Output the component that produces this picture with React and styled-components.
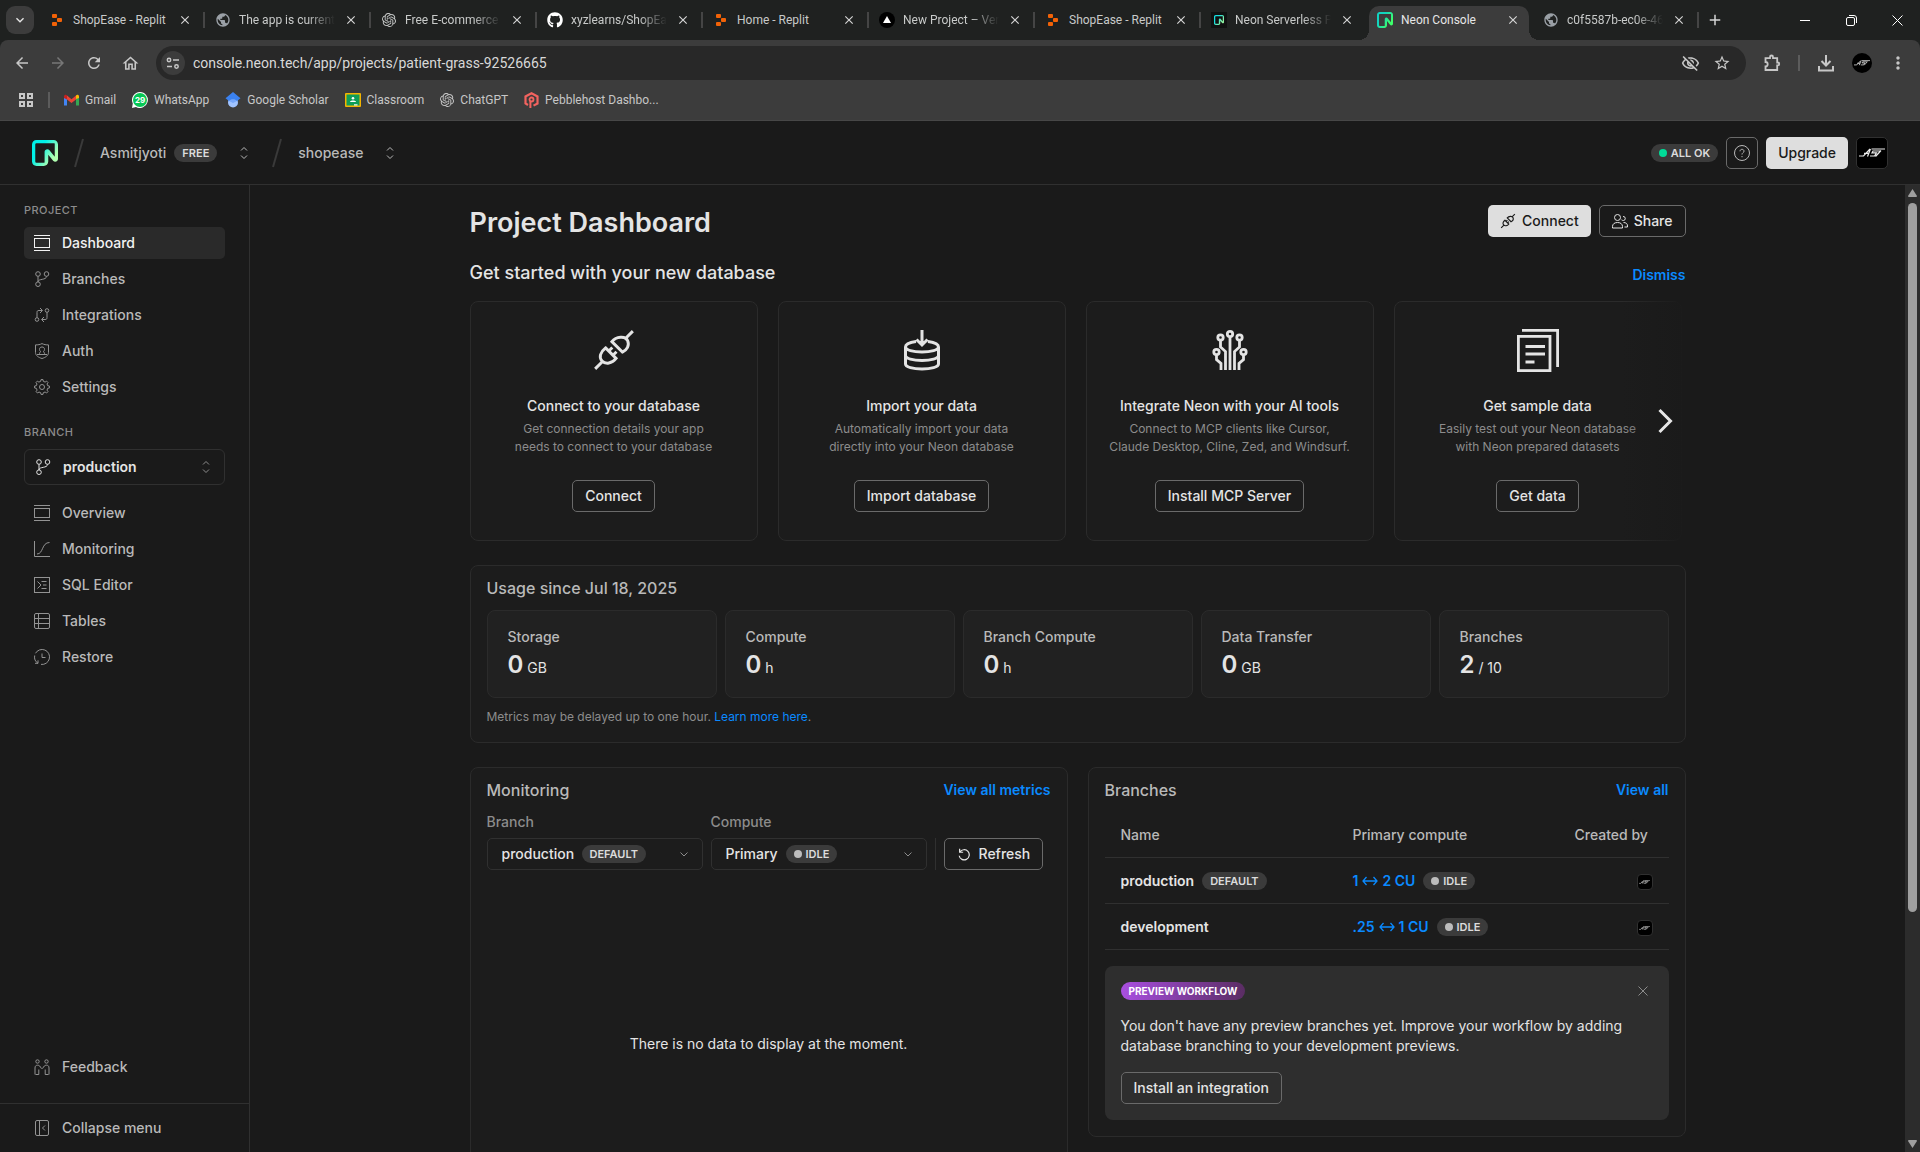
import React from "react";
import styled, { createGlobalStyle, css } from "styled-components";
import {
  MdPublic, MdArrowBack, MdArrowForward, MdRefresh, MdOutlineHome,
  MdStarBorder, MdOutlineVisibilityOff, MdMoreVert, MdClose, MdAdd, MdKeyboardArrowDown,
} from "react-icons/md";
import { FaGithub } from "react-icons/fa";
import { SiOpenai } from "react-icons/si";

const c = {
  bg: "#1a1a1a", panel: "#1c1c1c", card: "#212121", raised: "#2e2e2e", line: "#303030",
  badge: "#3b3b3b", outline: "#6a6a6a", text: "#e4e4e4", mid: "#b9b9b9", soft: "#8c8c8c",
  link: "#0a8aff", solid: "#dedede", strip: "#1f2120", chrome: "#3c3c3c", field: "#282828",
};
const ui = `Inter, "Liberation Sans", sans-serif`;
const browserFont = `Roboto, "Noto Sans", sans-serif`;

const Global = createGlobalStyle`
  *, *::before, *::after { box-sizing: border-box; }
  html, body, #root { height: 100%; }
  body { margin: 0; background: ${c.bg}; color: ${c.text}; font: 400 14px/20px ${ui}; }
  button, input, select { font: inherit; color: inherit; margin: 0; }
  button { cursor: pointer; padding: 0; border: 0; background: none; }
  a { text-decoration: none; color: inherit; }
  h1, h2, h3, p, ul { margin: 0; padding: 0; }
  ul { list-style: none; }
  svg { display: block; flex: none; }
`;

const Page = styled.div`
  display: flex;
  flex-direction: column;
  height: 100vh;
  overflow: hidden;
`;

/* ---------- browser chrome ---------- */

const Browser = styled.header`
  flex: none;
  background: ${c.strip};
  font-family: ${browserFont};
  font-size: 12px;
  line-height: 16px;
`;
const TabStrip = styled.div`
  display: flex;
  align-items: flex-end;
  height: 40px;
  padding-left: 6px;
  color: #c8cac9;
`;
const TabSearch = styled.button`
  display: grid;
  place-items: center;
  width: 28px;
  height: 28px;
  margin: 0 4px 6px 0;
  border-radius: 9px;
  background: ${c.chrome};
  color: #e6e6e6;
`;
const Tabs = styled.ul`
  display: flex;
  flex: 0 1 1660px;
  min-width: 0;
`;
const flare = css`
  content: "";
  position: absolute;
  bottom: 0;
  width: 10px;
  height: 10px;
`;
const Tab = styled.li`
  position: relative;
  display: flex;
  flex: 1 1 0;
  align-items: center;
  gap: 8px;
  min-width: 0;
  height: 34px;
  padding: 0 8px 6px 8px;
  margin: 0 3px;
  ${(p) => p.$active && css`
    border-radius: 10px 10px 0 0;
    background: ${c.chrome};
    color: #e6e6e6;
    &::before { ${flare} left: -10px; background: radial-gradient(circle at 0 0, transparent 10px, ${c.chrome} 10px); }
    &::after { ${flare} right: -10px; background: radial-gradient(circle at 100% 0, transparent 10px, ${c.chrome} 10px); }
  `}
  ${(p) => p.$divided && css`
    &::after { content: ""; position: absolute; right: -4px; top: 6px; width: 2px; height: 16px; background: #454545; }
  `}
`;
const Favicon = styled.span`
  display: grid;
  place-items: center;
  flex: none;
  width: 16px;
  height: 16px;
`;
const TabTitle = styled.button`
  flex: 1;
  min-width: 0;
  overflow: hidden;
  text-align: left;
  white-space: nowrap;
  ${(p) => p.$fade && css`mask-image: linear-gradient(90deg, #000 calc(100% - 28px), transparent);`}
`;
const TabClose = styled.button`
  display: grid;
  place-items: center;
  flex: none;
  width: 16px;
  height: 16px;
  color: #d5d5d5;
`;
const NewTab = styled(TabClose)`
  width: 20px;
  height: 20px;
  margin: 0 0 10px 7px;
`;
const WindowButtons = styled.div`
  display: flex;
  margin-left: auto;
  height: 40px;
  color: #fff;
`;
const WindowButton = styled.button`
  display: grid;
  place-items: center;
  width: 46px;
`;
const Chrome = styled.div`
  border-bottom: 1px solid #474747;
  border-radius: 8px 8px 0 0;
  background: ${c.chrome};
  color: #c7c7c7;
`;
const AddressRow = styled.div`
  display: flex;
  align-items: center;
  height: 46px;
  padding: 0 8px;
`;
const ToolButton = styled.button`
  display: grid;
  place-items: center;
  flex: none;
  width: ${(p) => p.$w || 28}px;
  height: 28px;
  margin-right: ${(p) => (p.$last ? 0 : 8)}px;
  color: ${(p) => (p.$dim ? "#777" : "#c7c7c7")};
`;
const Omnibox = styled.label`
  display: flex;
  flex: 1;
  align-items: center;
  gap: 8px;
  height: 34px;
  margin: 0 12px 0 4px;
  padding: 0 12px 0 5px;
  border-radius: 17px;
  background: ${c.field};
`;
const SiteInfo = styled.span`
  display: grid;
  place-items: center;
  width: 24px;
  height: 24px;
  border-radius: 50%;
  background: ${c.chrome};
`;
const Address = styled.input`
  flex: 1;
  min-width: 0;
  height: 24px;
  padding: 0;
  border: 0;
  outline: 0;
  background: none;
  color: #d8d8d8;
  font-size: 14px;
`;
const Rule = styled.span`
  flex: none;
  width: 2px;
  height: 16px;
  background: #5c5c5c;
`;
const ToolEnd = styled.div`
  display: flex;
  align-items: center;
  gap: 12px;
`;
const RoundAvatar = styled.span`
  display: grid;
  place-items: center;
  width: 20px;
  height: 20px;
  border-radius: 50%;
  background: #000;
`;
const BookmarkRow = styled.nav`
  display: flex;
  align-items: center;
  gap: 14px;
  height: 34px;
  padding: 0 18px 6px;
`;
const Bookmarks = styled.ul`
  display: flex;
  gap: 16px;
`;
const Bookmark = styled.a`
  display: flex;
  align-items: center;
  gap: 6px;
  white-space: nowrap;
`;

/* ---------- app shell ---------- */

const AppBar = styled.header`
  display: flex;
  flex: none;
  align-items: center;
  height: 64px;
  padding: 0 32px;
  border-bottom: 1px solid ${c.line};
`;
const Crumb = styled.button`
  display: flex;
  align-items: center;
  gap: 8px;
  margin-left: 16px;
  color: ${c.mid};
  font-weight: 500;
`;
const CrumbArrow = styled.span`
  display: grid;
  place-items: center;
  width: 16px;
  margin-left: 11px;
`;
const Slash = styled.span`
  margin-left: ${(p) => (p.$wide ? 20 : 16)}px;
`;
const AppBarEnd = styled.div`
  display: flex;
  align-items: center;
  gap: 8px;
  margin-left: auto;
`;
const Badge = styled.span`
  display: inline-flex;
  align-items: center;
  gap: 4px;
  height: 18px;
  padding: 0 8px;
  border-radius: 9px;
  background: ${(p) => (p.$accent ? "linear-gradient(90deg, #a94fe0, #5a2d63)" : c.badge)};
  color: ${(p) => (p.$accent ? "#fff" : "#dcdcdc")};
  font-size: ${(p) => (p.$accent ? 10 : 11)}px;
  font-weight: ${(p) => (p.$accent ? 700 : 600)};
  line-height: 18px;
  white-space: nowrap;
`;
const Dot = styled.span`
  width: 8px;
  height: 8px;
  border-radius: 50%;
  background: ${(p) => p.$color || "#bdbdbd"};
`;
const Button = styled.button`
  display: inline-flex;
  align-items: center;
  justify-content: center;
  gap: ${(p) => (p.$roomy ? 8 : 6)}px;
  height: 32px;
  padding: 0 12px;
  border: ${(p) => (p.$solid ? "0" : `1px solid ${c.outline}`)};
  border-radius: 5px;
  background: ${(p) => (p.$solid ? c.solid : "transparent")};
  color: ${(p) => (p.$solid ? "#1a1a1a" : c.text)};
  font-weight: 500;
  white-space: nowrap;
`;
const IconButton = styled(Button)`
  width: 32px;
  padding: 0;
  color: ${c.mid};
`;
const SquareAvatar = styled.span`
  display: inline-grid;
  place-items: center;
  width: ${(p) => p.$size}px;
  height: ${(p) => p.$size}px;
  border: 1px solid ${c.line};
  border-radius: ${(p) => (p.$size > 20 ? 5 : 4)}px;
  background: #000;
  vertical-align: middle;
`;
const Body = styled.div`
  display: flex;
  flex: 1;
  min-height: 0;
`;
const Sidebar = styled.aside`
  display: flex;
  flex: 0 0 250px;
  flex-direction: column;
  border-right: 1px solid ${c.line};
`;
const NavArea = styled.nav`
  flex: 1;
  padding: 16px 24px 0;
`;
const NavHeading = styled.h2`
  margin: ${(p) => (p.$later ? 20 : 0)}px 0 8px;
  color: ${c.soft};
  font-size: 11px;
  font-weight: 500;
  line-height: 18px;
  letter-spacing: 0.04em;
`;
const NavList = styled.ul`
  display: grid;
  gap: 4px;
`;
const navItem = css`
  display: flex;
  align-items: center;
  gap: 12px;
  width: 100%;
  height: 32px;
  padding: 0 10px;
  border-radius: 5px;
  font-weight: 500;
`;
const NavLink = styled.a`
  ${navItem}
  background: ${(p) => (p.$active ? "#2a2a2a" : "transparent")};
  color: ${(p) => (p.$active ? "#f2f2f2" : c.mid)};
  svg { color: ${(p) => (p.$active ? "#f2f2f2" : "#939393")}; }
`;
const NavButton = styled.button`
  ${navItem}
  color: ${c.mid};
  svg { color: #939393; }
`;
const BranchPicker = styled.label`
  display: flex;
  align-items: center;
  gap: 12px;
  height: 36px;
  margin-bottom: 12px;
  padding: 0 10px;
  border: 1px solid ${c.line};
  border-radius: 6px;
  svg:last-child { color: ${c.soft}; }
`;
const PlainSelect = styled.select`
  flex: 1;
  min-width: 0;
  height: 24px;
  padding: 0;
  border: 0;
  outline: 0;
  appearance: none;
  background: transparent;
  color: ${c.text};
  font-weight: ${(p) => p.$weight || 500};
`;
const NavExtra = styled.div`
  padding: 0 24px 20px;
`;
const NavFoot = styled.div`
  padding: 8px 24px;
  border-top: 1px solid ${c.line};
`;

/* ---------- dashboard ---------- */

const Main = styled.main`
  flex: 1;
  min-width: 0;
  overflow-y: auto;
  scrollbar-width: none;
`;
const Column = styled.div`
  max-width: 1216px;
  margin: 0 auto;
  padding: 20px 0 24px;
`;
const TitleRow = styled.div`
  display: flex;
  align-items: flex-start;
  justify-content: space-between;
  margin-bottom: 20px;
`;
const Title = styled.h1`
  font-size: 27px;
  font-weight: 600;
  line-height: 36px;
`;
const Actions = styled.div`
  display: flex;
  gap: 8px;
`;
const SubRow = styled.div`
  display: flex;
  align-items: flex-end;
  justify-content: space-between;
  margin-bottom: 16px;
`;
const Subtitle = styled.h2`
  font-size: 18px;
  font-weight: 500;
  line-height: 24px;
`;
const TextLink = styled.a`
  color: ${c.link};
  font-weight: ${(p) => p.$weight || 600};
`;
const TextButton = styled.button`
  color: ${c.link};
  font-weight: 600;
`;
const Carousel = styled.div`
  position: relative;
  margin-bottom: 24px;
`;
const Cards = styled.div`
  display: flex;
  gap: 20px;
  overflow: hidden;
`;
const Card = styled.article`
  display: flex;
  flex: 0 0 288px;
  flex-direction: column;
  align-items: center;
  padding: 26px 12px 28px;
  border: 1px solid #2b2b2b;
  border-radius: 8px;
  background: ${c.panel};
  text-align: center;
`;
const CardTitle = styled.h3`
  margin: 24px 0 4px;
  font-size: 14px;
  font-weight: 500;
  line-height: 20px;
`;
const CardText = styled.p`
  margin-bottom: 24px;
  color: ${c.soft};
  font-size: 12px;
  line-height: 18px;
  white-space: pre-line;
`;
const NextCards = styled.button`
  position: absolute;
  top: 0;
  right: 0;
  bottom: 0;
  width: 64px;
  display: flex;
  align-items: center;
  justify-content: flex-end;
  padding-right: 8px;
  background: linear-gradient(90deg, transparent, ${c.bg});
  color: #e6e6e6;
`;
const Panel = styled.section`
  padding: 10px 16px 16px;
  border: 1px solid #2b2b2b;
  border-radius: 8px;
  background: ${c.panel};
`;
const PanelHead = styled.div`
  display: flex;
  align-items: center;
  justify-content: space-between;
  margin-bottom: 10px;
`;
const PanelTitle = styled.h2`
  color: ${c.mid};
  font-size: 16px;
  font-weight: 500;
  line-height: 24px;
`;
const Stats = styled.div`
  display: grid;
  grid-template-columns: repeat(5, 1fr);
  gap: 8px;
  margin-bottom: 10px;
`;
const Stat = styled.div`
  height: 88px;
  padding: 16px 20px;
  border: 1px solid #2b2b2b;
  border-radius: 8px;
  background: ${c.card};
`;
const StatLabel = styled.div`
  color: ${c.mid};
  font-weight: 500;
`;
const StatValue = styled.div`
  line-height: 36px;
  b { font-size: 24px; font-weight: 600; }
`;
const Note = styled.p`
  color: ${c.soft};
  font-size: 12px;
  line-height: 18px;
`;
const Pair = styled.div`
  display: grid;
  grid-template-columns: 1fr 1fr;
  gap: 20px;
  align-items: start;
  margin-top: 24px;
`;
const Filters = styled.div`
  display: flex;
  align-items: flex-end;
  gap: 8px;
`;
const Field = styled.div`
  flex: 0 1 216px;
  min-width: 0;
`;
const FieldLabel = styled.label`
  display: block;
  margin-bottom: 6px;
  color: ${c.soft};
  font-weight: 500;
`;
const SelectBox = styled.div`
  display: grid;
  grid-template-columns: auto 1fr auto;
  align-items: center;
  height: 32px;
  padding: 0 12px 0 14px;
  border: 1px solid ${c.line};
  border-radius: 5px;
  color: ${c.soft};
  select { grid-area: 1 / 1 / 2 / 4; width: 100%; }
  ${Badge} { grid-area: 1 / 1; margin-left: ${(p) => p.$offset}px; pointer-events: none; }
  svg { grid-area: 1 / 3; pointer-events: none; }
`;
const FilterRule = styled.span`
  width: 1px;
  height: 32px;
  background: ${c.line};
`;
const Empty = styled.p`
  display: grid;
  place-items: center;
  height: 348px;
`;
const Table = styled.table`
  width: 100%;
  margin-bottom: 16px;
  table-layout: fixed;
  border-collapse: separate;
  border-spacing: 0;
`;
const Th = styled.th`
  width: ${(p) => p.$w};
  height: 46px;
  padding: 0 16px;
  border-bottom: 1px solid ${c.line};
  color: ${c.mid};
  font-weight: 500;
  text-align: left;
`;
const Td = styled.td`
  height: 46px;
  padding: 0 16px;
  border-bottom: 1px solid ${c.line};
  font-weight: 600;
  text-align: ${(p) => (p.$end ? "right" : "left")};
`;
const Inline = styled.span`
  display: inline-flex;
  align-items: center;
  gap: 8px;
`;
const Size = styled(TextLink)`
  display: inline-flex;
  align-items: center;
  gap: 4px;
`;
const Notice = styled.aside`
  display: grid;
  grid-template-columns: 1fr auto;
  gap: 16px;
  justify-items: start;
  padding: 16px;
  border-radius: 8px;
  background: ${c.raised};
`;
const NoticeText = styled.p`
  grid-column: 1 / -1;
  max-width: 520px;
`;
const CloseButton = styled.button`
  display: grid;
  place-items: center;
  width: 20px;
  height: 18px;
  color: #8c8c8c;
`;

const Scrollbar = styled.div`
  display: flex;
  flex: 0 0 15px;
  flex-direction: column;
  align-items: center;
  background: #2c2c2c;
  color: #9f9f9f;
`;
const Track = styled.div`
  flex: 1;
  padding-top: 2px;
`;
const Thumb = styled.div`
  width: 9px;
  height: 76%;
  border-radius: 5px;
  background: currentColor;
`;
const ScrollArrow = styled.span`
  display: grid;
  place-items: center;
  height: 16px;
`;

/* ---------- drawings ---------- */

const Svg = ({ size = 16, box = 16, w = 1, children }) => (
  <svg width={size} height={size} viewBox={`0 0 ${box} ${box}`} fill="none" stroke="currentColor" strokeWidth={w} aria-hidden="true">{children}</svg>
);

const NeonMark = ({ size, from, to, id }) => (
  <svg width={size} height={size} viewBox="0 0 64 64" aria-hidden="true">
    <defs>
      <linearGradient id={id} x1="0" y1="10" x2="64" y2="54" gradientUnits="userSpaceOnUse">
        <stop stopColor={from} /><stop offset="0.3" stopColor={from} /><stop offset="0.8" stopColor={to} /><stop offset="1" stopColor={to} />
      </linearGradient>
    </defs>
    <path fill={`url(#${id})`} d="M0 11C0 5 5 0 11 0h42c6 0 11 5 11 11v36c0 6-8 9-12 4L40 36v17c0 6-5 11-11 11H11C5 64 0 59 0 53V11Zm11-3a3 3 0 0 0-3 3v42a3 3 0 0 0 3 3h19c1 0 1-1 1-2V29c0-6 8-9 12-4l13 16V11c0-2 0-3-2-3H11Z" />
  </svg>
);
const ReplitMark = () => (
  <svg width="12" height="14" viewBox="0 0 12 14" fill="#f26207" aria-hidden="true">
    <rect x="1" y="1" width="5" height="4" rx="1" /><rect x="6" y="5" width="5" height="4" rx="1" /><rect x="1" y="9" width="5" height="4" rx="1" />
  </svg>
);
const VercelMark = () => (
  <svg width="16" height="16" viewBox="0 0 16 16" aria-hidden="true"><circle cx="8" cy="8" r="8" fill="#000" /><path d="M8 4l4 7H4z" fill="#fff" /></svg>
);
const NeonTile = () => (
  <svg width="16" height="16" viewBox="0 0 16 16" aria-hidden="true"><rect width="16" height="16" fill="#111" /><g transform="translate(3 3)"><NeonMark size={10} from="#16e0e0" to="#8ff0a0" id="nt" /></g></svg>
);
const Monogram = ({ width }) => (
  <svg width={width} height={(width * 9) / 26} viewBox="0 0 26 9" fill="none" stroke="#ececec" strokeWidth="1.2" aria-hidden="true">
    <path d="M0 8h4.500L11 1M5 5.300h5M8.500 8.500l3-7.500M12.500 1h13.500M11 8h4.500l2-3.200h-4.500l1-1.800h7M16.500 8.500L22 2.500" />
  </svg>
);
const GmailMark = () => (
  <svg width="15" height="12" viewBox="0 0 15 12" aria-hidden="true">
    <path d="M0 2v9.500h3V5z" fill="#4285f4" /><path d="M15 2v9.500h-3V5z" fill="#34a853" />
    <path d="M12 5V1.500C13 .3 15 .8 15 2.400V4z" fill="#fbbc04" /><path d="M0 4V2.400C0 .8 2 .3 3 1.500V5.500z" fill="#c5221f" />
    <path d="M3 1.500l4.500 3.700L12 1.500v4L7.500 9 3 5.500z" fill="#ea4335" />
  </svg>
);
const WhatsAppMark = () => (
  <svg width="16" height="16" viewBox="0 0 16 16" aria-hidden="true">
    <path d="M8 0a8 8 0 1 1-4 15L0 16l.800-4.500A8 8 0 0 1 8 0z" fill="#fff" /><circle cx="8" cy="8" r="7" fill="#06c755" />
    <text x="8" y="11" textAnchor="middle" fontFamily="Inter, sans-serif" fontSize="8" fontWeight="700" fill="#fff">29</text>
  </svg>
);
const ScholarMark = () => (
  <svg width="16" height="16" viewBox="0 0 16 16" aria-hidden="true">
    <circle cx="8" cy="10.500" r="5" fill="#a0c3ff" /><path d="M3 8.500C4 5.500 12 5.500 13 8.500L8 11z" fill="#76a7fa" />
    <path d="M8 0l7.500 6.200L12 9C10.500 6.500 5.500 6.500 4 9L.500 6.200z" fill="#3b82f0" />
  </svg>
);
const ClassroomMark = () => (
  <svg width="16" height="14" viewBox="0 0 16 14" aria-hidden="true">
    <rect width="16" height="14" rx="1" fill="#f4b400" /><rect x="1.500" y="1.500" width="13" height="11" fill="#0f9d58" />
    <circle cx="8" cy="5.300" r="1.300" fill="#fff" /><path d="M5 9c0-2 6-2 6 0z" fill="#fff" /><rect x="9" y="11.300" width="3.500" height="1.200" fill="#fff" />
  </svg>
);
const PebbleMark = () => (
  <svg width="15" height="16" viewBox="0 0 15 16" fill="none" stroke="#f2635f" aria-hidden="true">
    <path d="M4 13L1.500 11.500v-7L7.500 1.300l6 3.200v7L9.500 13.600" strokeWidth="2.200" /><circle cx="7.500" cy="7.500" r="2" strokeWidth="1.800" /><path d="M6.400 9v7" strokeWidth="2" />
  </svg>
);
const UpDown = () => (
  <Svg size={16}><path d="M5 5.500L8 2.500l3 3M5 10.500l3 3 3-3" /></Svg>
);
const SlashMark = () => (
  <svg width="10" height="30" viewBox="0 0 10 30" stroke="#3a3a3a" strokeWidth="2" aria-hidden="true"><path d="M9 1L1 29" /></svg>
);
const Down = () => <Svg size={12} box={12}><path d="M2.500 4.500L6 8l3.500-3.500" /></Svg>;

const plug = (
  <path d="M15.500 5.500l4-4M1.500 19.500l4-4M9.500 6.500l5 5c2.200-1 3.500-3.200 2.500-5.500S11.500 4 9.500 6.500zM6.500 9.500l5 5C9.500 17 6.500 17.500 4.800 15.700S4 11.500 6.500 9.500zM8 11l1.700-1.700M10 13l1.700-1.700" />
);
const icons = {
  frame: <><path d="M0 .5h16M0 15.500h16" /><rect x=".5" y="3.500" width="15" height="9" /></>,
  branch: <><circle cx="4" cy="3" r="2.300" /><circle cx="12.500" cy="3" r="2.300" /><circle cx="4" cy="13.200" r="2.300" /><path d="M4 5.300v5.600M12.500 5.300c0 4.200-8.500 2-8.500 5.600" /></>,
  integrate: <><circle cx="3" cy="12.500" r="1.800" /><circle cx="13" cy="3.500" r="1.800" /><path d="M3 10.700V5.500c0-1.500.5-2 2-2h3M6 1l2.500 2.500L6 6M13 5.300v5.200c0 1.500-.5 2-2 2H8M10 10l-2.500 2.500L10 15" /></>,
  shield: <><path d="M8 .6c2 1 4 1.300 6.500 1.300v7.600c0 3-3 5-6.500 6-3.500-1-6.500-3-6.500-6V1.900C4 1.900 6 1.600 8 .6z" /><path d="M5.500 12v-1.500c0-1 .5-1.500 1.200-1.800-1-.8-1.200-1.700-1.200-2.400C5.500 4.800 6.500 4 8 4s2.500.8 2.500 2.300c0 .7-.2 1.600-1.200 2.400.7.300 1.200.8 1.200 1.800V12M3 11.500h10" /></>,
  gear: <><circle cx="8" cy="8" r="2.500" /><path d="M6.700 2.300L7 .6h2l.3 1.700 1.800.8 1.500-1 1.400 1.400-1 1.500.7 1.700 1.700.3v2l-1.700.3-.7 1.800 1 1.500-1.400 1.400-1.500-1-1.800.7L9 15.400H7l-.3-1.700-1.700-.7-1.500 1L2.100 12.600l1-1.500-.8-1.800L.6 9V7l1.700-.3L3 5 2 3.500 3.400 2.100l1.500 1z" /></>,
  curve: <path d="M.5 0v15.500H16M3 13c6.500 0 4.500-11.500 12.500-11.500" />,
  sql: <><rect x=".5" y=".5" width="15" height="15" /><path d="M3.500 4.500L7 8l-3.500 3.500M7.500 4.500h5M9 8h3.500M7.500 11.500h5" /></>,
  grid: <><rect x=".5" y=".5" width="15" height="15" rx="1.500" /><path d="M4.500.5v15M.5 5.500h15M.5 10.500h15" /></>,
  history: <><path d="M4 14.300H1M4 14.300v-3M4 14.300A7.500 7.500 0 0 1 .700 6.500M1.500 4.300A7.500 7.500 0 1 1 7 15.400" /><path d="M8 4.500v4h3.500" /></>,
  people: <><circle cx="3.500" cy="2.500" r="1.700" /><circle cx="12.500" cy="2.500" r="1.700" /><path d="M1.500 15.500h3.300v-5M1 15.500V9c0-2 1-2.800 2.500-2.800 2 0 2.500 1 4 3.500M14.500 15.500h-3.300v-5M15 15.500V9c0-2-1-2.800-2.500-2.800-2 0-2.500 1-4 3.500" /></>,
  collapse: <><rect x="1.500" y=".5" width="13" height="15" rx="1.500" /><path d="M5.500.5v15M11 5.500L8.500 8l2.500 2.500" /></>,
};
const Icon = ({ name }) => <Svg>{icons[name]}</Svg>;

const cardIcons = {
  plug: <Svg size={44} box={21} w={1.4}>{plug}</Svg>,
  db: (
    <Svg size={44} box={44} w={3}>
      <path d="M16 13.500C9 14.500 5.500 16.500 5.500 19c0 3 7.500 5 16.500 5s16.500-2 16.500-5c0-2.500-3.500-4.500-10.500-5.500M5.500 19v17c0 3 7.500 5 16.500 5s16.500-2 16.500-5V19M5.500 27.500c0 3 7.500 5 16.500 5s16.500-2 16.500-5M22 2v15M16.500 11.500L22 17l5.500-5.500" />
    </Svg>
  ),
  ai: (
    <Svg size={44} box={44} w={2.8}>
      <circle cx="22" cy="6" r="2.700" /><circle cx="12.500" cy="9.500" r="2.700" /><circle cx="31.500" cy="9.500" r="2.700" /><circle cx="8.500" cy="24" r="2.700" /><circle cx="35.500" cy="24" r="2.700" />
      <path d="M22 9v33M12.500 12.500v6.500l5 4.500V42M31.500 12.500v6.500l-5 4.500V42M8.500 27v4.500l4.500 4V42M35.500 27v4.500l-4.500 4V42" />
    </Svg>
  ),
  docs: (
    <Svg size={44} box={44} w={2.8}>
      <rect x="2.400" y="8.400" width="31.600" height="34.200" /><path d="M6 2.400h35.600V39M9.500 18.500H29M9.500 26H29M9.500 34h9" />
    </Svg>
  ),
};

/* ---------- data ---------- */

const tabs = [
  { title: "ShopEase - Replit", icon: <ReplitMark /> },
  { title: "The app is current", icon: <MdPublic size={16} color="#9aa0a6" />, fade: true },
  { title: "Free E-commerce", icon: <SiOpenai size={14} />, fade: true },
  { title: "xyzlearns/ShopEas", icon: <FaGithub size={16} color="#fff" />, fade: true },
  { title: "Home - Replit", icon: <ReplitMark /> },
  { title: "New Project – Ver", icon: <VercelMark />, fade: true },
  { title: "ShopEase - Replit", icon: <ReplitMark /> },
  { title: "Neon Serverless P", icon: <NeonTile />, fade: true },
  { title: "Neon Console", icon: <NeonMark size={16} from="#12d3c0" to="#3dff6a" id="nc" /> },
  { title: "c0f5587b-ec0e-46", icon: <MdPublic size={16} color="#9aa0a6" />, fade: true },
];
const bookmarks = [
  ["Gmail", <GmailMark />],
  ["WhatsApp", <WhatsAppMark />],
  ["Google Scholar", <ScholarMark />],
  ["Classroom", <ClassroomMark />],
  ["ChatGPT", <SiOpenai size={14} />],
  ["Pebblehost Dashbo...", <PebbleMark />],
];
const projectNav = [["Dashboard", "frame"], ["Branches", "branch"], ["Integrations", "integrate"], ["Auth", "shield"], ["Settings", "gear"]];
const branchNav = [["Overview", "frame"], ["Monitoring", "curve"], ["SQL Editor", "sql"], ["Tables", "grid"], ["Restore", "history"]];
const cards = [
  ["plug", "Connect to your database", "Get connection details your app\nneeds to connect to your database", "Connect"],
  ["db", "Import your data", "Automatically import your data\ndirectly into your Neon database", "Import database"],
  ["ai", "Integrate Neon with your AI tools", "Connect to MCP clients like Cursor,\nClaude Desktop, Cline, Zed, and Windsurf.", "Install MCP Server"],
  ["docs", "Get sample data", "Easily test out your Neon database\nwith Neon prepared datasets", "Get data"],
];
const stats = [["Storage", "0", "GB"], ["Compute", "0", "h"], ["Branch Compute", "0", "h"], ["Data Transfer", "0", "GB"], ["Branches", "2", "/ 10"]];
const branches = [
  { name: "production", main: true, min: "1", max: "2 CU" },
  { name: "development", min: ".25", max: "1 CU" },
];

const Idle = () => <Badge><Dot />IDLE</Badge>;
const Nav = ({ items, active }) => (
  <NavList>
    {items.map(([label, icon]) => (
      <li key={label}><NavLink href="#" $active={label === active}><Icon name={icon} />{label}</NavLink></li>
    ))}
  </NavList>
);

function BrowserChrome() {
  const active = 8;
  return (
    <Browser>
      <TabStrip>
        <TabSearch aria-label="Search tabs"><MdKeyboardArrowDown size={16} /></TabSearch>
        <Tabs>
          {tabs.map((tab, i) => (
            <Tab key={i} $active={i === active} $divided={i !== active && i !== active - 1}>
              <Favicon>{tab.icon}</Favicon>
              <TabTitle $fade={tab.fade}>{tab.title}</TabTitle>
              <TabClose aria-label="Close tab"><MdClose size={14} /></TabClose>
            </Tab>
          ))}
        </Tabs>
        <NewTab aria-label="New tab"><MdAdd size={18} /></NewTab>
        <WindowButtons>
          <WindowButton aria-label="Minimize"><Svg size={10} box={10}><path d="M0 5.500h10" /></Svg></WindowButton>
          <WindowButton aria-label="Restore"><Svg size={11} box={11}><rect x=".5" y="2.500" width="8" height="8" rx="1.500" /><path d="M3 .5h5a2.500 2.500 0 0 1 2.500 2.500v5" /></Svg></WindowButton>
          <WindowButton aria-label="Close"><Svg size={11} box={11}><path d="M.5.5l10 10M10.500.5l-10 10" /></Svg></WindowButton>
        </WindowButtons>
      </TabStrip>
      <Chrome>
        <AddressRow>
          <ToolButton aria-label="Back"><MdArrowBack size={18} /></ToolButton>
          <ToolButton $dim aria-label="Forward"><MdArrowForward size={18} /></ToolButton>
          <ToolButton aria-label="Reload"><MdRefresh size={18} /></ToolButton>
          <ToolButton aria-label="Home"><MdOutlineHome size={19} /></ToolButton>
          <Omnibox>
            <SiteInfo><Svg size={14} box={14} w={1.5}><circle cx="3" cy="4" r="1.700" /><path d="M7 4h6M1 10.500h5" /><circle cx="10.500" cy="10.500" r="1.700" /></Svg></SiteInfo>
            <Address aria-label="Address" defaultValue="console.neon.tech/app/projects/patient-grass-92526665" />
            <ToolButton $last $w={24} aria-label="Tracking protection"><MdOutlineVisibilityOff size={19} /></ToolButton>
            <ToolButton $last $w={24} aria-label="Bookmark"><MdStarBorder size={18} /></ToolButton>
          </Omnibox>
          <ToolEnd>
            <ToolButton $last aria-label="Extensions"><Svg size={18} box={18} w={1.8}><path d="M2.500 4.200H7V3a1.500 1.500 0 0 1 3 0v1.200h4.200V8.500h.6a1.400 1.400 0 0 1 0 2.800h-.6V16H2.500v-3.600a2.200 2.200 0 0 0 0-4.400z" /></Svg></ToolButton>
            <Rule />
            <ToolButton $last aria-label="Downloads"><Svg size={18} box={18} w={2}><path d="M9 1v10M4.500 7L9 11.500 13.500 7M2 12v4.500h14V12" /></Svg></ToolButton>
            <ToolButton $last $w={20} aria-label="Profile"><RoundAvatar><Monogram width={16} /></RoundAvatar></ToolButton>
            <ToolButton $last aria-label="Menu"><MdMoreVert size={20} /></ToolButton>
          </ToolEnd>
        </AddressRow>
        <BookmarkRow>
          <Svg size={16} w={2}><rect x="2" y="2" width="4" height="4" /><rect x="10" y="2" width="4" height="4" /><rect x="2" y="10" width="4" height="4" /><rect x="10" y="10" width="4" height="4" /></Svg>
          <Rule />
          <Bookmarks>
            {bookmarks.map(([label, icon]) => <li key={label}><Bookmark href="#">{icon}{label}</Bookmark></li>)}
          </Bookmarks>
        </BookmarkRow>
      </Chrome>
    </Browser>
  );
}

export default function App() {
  return (
    <Page>
      <Global />
      <BrowserChrome />
      <AppBar>
        <NeonMark size={26} from="#00f0e8" to="#b0ffb0" id="nh" />
        <Slash><SlashMark /></Slash>
        <Crumb>Asmitjyoti<Badge>FREE</Badge><CrumbArrow><UpDown /></CrumbArrow></Crumb>
        <Slash $wide><SlashMark /></Slash>
        <Crumb>shopease<CrumbArrow><UpDown /></CrumbArrow></Crumb>
        <AppBarEnd>
          <Badge><Dot $color="#00dc98" />ALL OK</Badge>
          <IconButton aria-label="Help"><Svg size={16}><circle cx="8" cy="8" r="7.500" /><path d="M6 6.300C6 5 7 4.300 8 4.300s2 .7 2 1.900c0 1.500-2 1.500-2 3.300M8 11v1.200" /></Svg></IconButton>
          <Button $solid>Upgrade</Button>
          <SquareAvatar $size={32}><Monogram width={26} /></SquareAvatar>
        </AppBarEnd>
      </AppBar>
      <Body>
        <Sidebar>
          <NavArea>
            <NavHeading>PROJECT</NavHeading>
            <Nav items={projectNav} active="Dashboard" />
            <NavHeading $later>BRANCH</NavHeading>
            <BranchPicker>
              <Icon name="branch" />
              <PlainSelect $weight={600} aria-label="Branch" defaultValue="production"><option>production</option><option>development</option></PlainSelect>
              <UpDown />
            </BranchPicker>
            <Nav items={branchNav} />
          </NavArea>
          <NavExtra><NavButton><Icon name="people" />Feedback</NavButton></NavExtra>
          <NavFoot><NavButton><Icon name="collapse" />Collapse menu</NavButton></NavFoot>
        </Sidebar>
        <Main>
          <Column>
            <TitleRow>
              <Title>Project Dashboard</Title>
              <Actions>
                <Button $solid><Svg size={16} box={21} w={1.5}>{plug}</Svg>Connect</Button>
                <Button><Svg size={16}><circle cx="5.500" cy="4.500" r="3" /><path d="M.5 15v-1.500C.5 11 2.500 9.500 5.500 9.500s5 1.500 5 4V15zM9.500 6.800c.5.500 1.200.7 2 .7a2 2 0 1 0-.5-4M11.500 9.500c2.500 0 4 1.200 4 3.500v1h-3" /></Svg>Share</Button>
              </Actions>
            </TitleRow>
            <SubRow>
              <Subtitle>Get started with your new database</Subtitle>
              <TextButton>Dismiss</TextButton>
            </SubRow>
            <Carousel>
              <Cards>
                {cards.map(([icon, title, text, action]) => (
                  <Card key={title}>
                    {cardIcons[icon]}
                    <CardTitle>{title}</CardTitle>
                    <CardText>{text}</CardText>
                    <Button>{action}</Button>
                  </Card>
                ))}
              </Cards>
              <NextCards aria-label="Next"><Svg size={26} box={26} w={3}><path d="M7.500 2l11 11-11 11" /></Svg></NextCards>
            </Carousel>
            <Panel>
              <PanelHead><PanelTitle>Usage since Jul 18, 2025</PanelTitle></PanelHead>
              <Stats>
                {stats.map(([label, value, unit]) => (
                  <Stat key={label}><StatLabel>{label}</StatLabel><StatValue><b>{value}</b> {unit}</StatValue></Stat>
                ))}
              </Stats>
              <Note>Metrics may be delayed up to one hour. <TextLink href="#" $weight={400}>Learn more here</TextLink>.</Note>
            </Panel>
            <Pair>
              <Panel>
                <PanelHead><PanelTitle>Monitoring</PanelTitle><TextLink href="#">View all metrics</TextLink></PanelHead>
                <Filters>
                  <Field>
                    <FieldLabel htmlFor="branch">Branch</FieldLabel>
                    <SelectBox $offset={80}><PlainSelect id="branch" defaultValue="production"><option>production</option><option>development</option></PlainSelect><Badge>DEFAULT</Badge><Down /></SelectBox>
                  </Field>
                  <Field>
                    <FieldLabel htmlFor="compute">Compute</FieldLabel>
                    <SelectBox $offset={60}><PlainSelect id="compute" defaultValue="Primary"><option>Primary</option></PlainSelect><Idle /><Down /></SelectBox>
                  </Field>
                  <FilterRule />
                  <Button $roomy><Svg size={14} box={16} w={1.4}><path d="M3 2v4h4M3.300 5.800A5.800 5.800 0 1 1 2.500 10" /></Svg>Refresh</Button>
                </Filters>
                <Empty>There is no data to display at the moment.</Empty>
              </Panel>
              <Panel>
                <PanelHead><PanelTitle>Branches</PanelTitle><TextLink href="#">View all</TextLink></PanelHead>
                <Table>
                  <thead><tr><Th $w="232px">Name</Th><Th $w="auto">Primary compute</Th><Th $w="110px">Created by</Th></tr></thead>
                  <tbody>
                    {branches.map((b) => (
                      <tr key={b.name}>
                        <Td><Inline><a href="#">{b.name}</a>{b.main && <Badge>DEFAULT</Badge>}</Inline></Td>
                        <Td><Inline><Size href="#">{b.min}<Svg size={16} w={1.3}><path d="M1 8h14M4.500 4L1 8l3.500 4M11.500 4L15 8l-3.500 4" /></Svg>{b.max}</Size><Idle /></Inline></Td>
                        <Td $end><SquareAvatar $size={16}><Monogram width={11} /></SquareAvatar></Td>
                      </tr>
                    ))}
                  </tbody>
                </Table>
                <Notice>
                  <Badge $accent>PREVIEW WORKFLOW</Badge>
                  <CloseButton aria-label="Dismiss notice"><Svg size={10} box={10}><path d="M.5.5l9 9M9.500.5l-9 9" /></Svg></CloseButton>
                  <NoticeText>You don't have any preview branches yet. Improve your workflow by adding database branching to your development previews.</NoticeText>
                  <Button>Install an integration</Button>
                </Notice>
              </Panel>
            </Pair>
          </Column>
        </Main>
        <Scrollbar aria-hidden="true">
          <ScrollArrow><svg width="9" height="8" viewBox="0 0 9 8" fill="currentColor"><path d="M4.500 0L9 7q0 1-1 1H1q-1 0-1-1z" /></svg></ScrollArrow>
          <Track><Thumb /></Track>
          <ScrollArrow><svg width="9" height="8" viewBox="0 0 9 8" fill="currentColor"><path d="M4.500 8L9 1q0-1-1-1H1Q0 0 0 1z" /></svg></ScrollArrow>
        </Scrollbar>
      </Body>
    </Page>
  );
}
